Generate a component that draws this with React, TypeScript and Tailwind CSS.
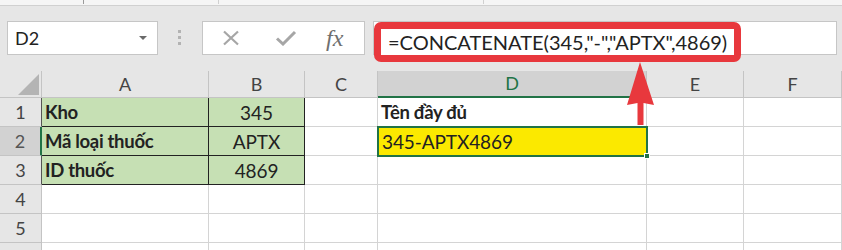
import React from "react";

const cols = ["A", "B", "C", "D", "E", "F"];

const font = { fontFamily: "Lato, 'Noto Sans', sans-serif" };

export default function App() {
  return (
    <div className="relative h-[250px] w-[842px] overflow-hidden bg-white text-[#222]" style={font}>
      {/* ribbon remnant */}
      <div className="flex h-[6px] border-b border-[#d0d0d0] bg-[#f5f5f5]">
        <div className="ml-[83px] h-[4px] w-px bg-[#9a9a9a]" />
        <div className="ml-[134px] h-[4px] w-px bg-[#d0d0d0]" />
        <div className="ml-[264px] h-[4px] w-px bg-[#d0d0d0]" />
      </div>

      {/* formula bar */}
      <div className="flex h-[65px] items-start bg-[#e6e6e6] pt-[15px]">
        <div className="ml-[7px] flex h-[34px] w-[151px] items-center justify-between border border-[#c6c6c6] bg-white pl-[7px] pr-[10px]">
          <span className="text-[18px] leading-none text-[#222]">D2</span>
          <div className="h-0 w-0 border-x-[4px] border-t-[4px] border-x-transparent border-t-[#6a6a6a]" />
        </div>
        <div className="ml-[20px] mt-[9px] flex flex-col gap-[3px]">
          <div className="h-[3px] w-[3px] bg-[#b3b3b3]" />
          <div className="h-[3px] w-[3px] bg-[#b3b3b3]" />
          <div className="h-[3px] w-[3px] bg-[#b3b3b3]" />
        </div>
        <div className="ml-[21px] flex h-[34px] w-[163px] items-center border border-[#c6c6c6] bg-white">
          <svg width="22" height="16" viewBox="0 0 22 16" className="ml-[18px]">
            <path d="M3 1.5 L17 14.5 M17 1.5 L3 14.5" stroke="#a6a6a6" strokeWidth="2.2" fill="none" />
          </svg>
          <svg width="22" height="16" viewBox="0 0 22 16" className="ml-[32px]">
            <path d="M2 8.5 L8 14 L20 2" stroke="#a6a6a6" strokeWidth="3" fill="none" />
          </svg>
          <span
            className="ml-[29px] text-[24px] italic leading-none text-[#6f6f6f]"
            style={{ fontFamily: "'Liberation Serif', 'DejaVu Serif', serif" }}
          >
            fx
          </span>
        </div>
        <div className="relative ml-[8px] mr-[5px] h-[34px] flex-1 border border-[#c6c6c6] bg-white">
          <div className="absolute left-0 top-0 flex h-[40px] w-[367px] items-center rounded-[7px] border-[7px] border-[#e8383d] bg-white pl-[7px]">
            <span className="whitespace-nowrap text-[20px] leading-none text-[#222]">
              =CONCATENATE(345,"-","APTX",4869)
            </span>
          </div>
        </div>
      </div>

      {/* sheet grid */}
      <div className="grid grid-cols-[42px_167px_96px_73px_269px_97px_1fr] grid-rows-[27px_29px_29px_29px_29px_29px_29px] bg-[#e6e6e6]">
        {/* corner */}
        <div className="flex items-end justify-end border-b border-r border-[#c4c4c4] pb-[2px] pr-[2px]">
          <div className="h-0 w-0 border-b-[21px] border-l-[21px] border-b-[#b4b4b4] border-l-transparent" />
        </div>
        {cols.map((c) => (
          <div
            key={c}
            className={
              c === "D"
                ? "flex items-center justify-center border-b-2 border-r border-b-[#217346] border-r-[#c4c4c4] bg-[#d2d2d2] text-[18px] text-[#217346]"
                : "flex items-center justify-center border-b border-r border-[#c4c4c4] text-[18px] text-[#444]"
            }
          >
            {c}
          </div>
        ))}

        {[1, 2, 3, 4, 5, 6].map((r) => (
          <Row key={r} r={r} />
        ))}
      </div>

      {/* red arrow */}
      <svg width="30" height="66" viewBox="0 0 30 66" className="absolute left-[626px] top-[61px]">
        <path d="M14 1 L28 44 L17.5 42 L17.5 64 L11.5 64 L11.5 42 L1 44 Z" fill="#e8383d" />
      </svg>
    </div>
  );
}

function Row({ r }: { r: number }) {
  const sel = r === 2;
  const boxed = r <= 3;
  const labels: Record<number, string[]> = {
    1: ["Kho", "345"],
    2: ["Mã loại thuốc", "APTX"],
    3: ["ID thuốc", "4869"],
  };
  const rowHead = sel
    ? "flex items-center justify-center border-b border-r-2 border-b-[#c4c4c4] border-r-[#217346] bg-[#d2d2d2] text-[18px] text-[#555]"
    : boxed
      ? "flex items-center justify-center border-b border-r border-b-[#c4c4c4] border-r-[#555] text-[18px] text-[#444]"
      : "flex items-center justify-center border-b border-r border-[#c4c4c4] text-[18px] text-[#444]";
  const green = "border-b border-r border-[#222] bg-[#c6e0b4]";
  const plain = "border-b border-r border-[#d4d4d4] bg-white";
  const bold = "text-[18.5px] font-bold tracking-[-0.3px]";
  const reg = "text-[19px] tracking-[-0.1px]";
  return (
    <>
      <div className={rowHead}>{r < 6 ? r : ""}</div>
      {boxed ? (
        <>
          <div className={`${green} ${bold} flex items-center pl-[3px] pt-[2px]`}>{labels[r][0]}</div>
          <div className={`${green} ${reg} flex items-center justify-center pt-[2px]`}>{labels[r][1]}</div>
        </>
      ) : (
        <>
          <div className={plain} />
          <div className={plain} />
        </>
      )}
      <div className={plain} />
      {r === 1 ? (
        <div className={`${plain} ${bold} flex items-center pl-[3px] pt-[2px]`}>Tên đầy đủ</div>
      ) : r === 2 ? (
        <div className={`${reg} relative flex items-center bg-[#fbe900] pl-[4px] pt-[2px]`}>
          <div className="absolute -bottom-px -left-px -right-px -top-px border-2 border-[#217346]" />
          <div className="absolute -bottom-[3px] -right-[3px] h-[6px] w-[6px] border border-white bg-[#217346]" />
          <span className="relative">345-APTX4869</span>
        </div>
      ) : (
        <div className={plain} />
      )}
      <div className={plain} />
      <div className={plain} />
    </>
  );
}
